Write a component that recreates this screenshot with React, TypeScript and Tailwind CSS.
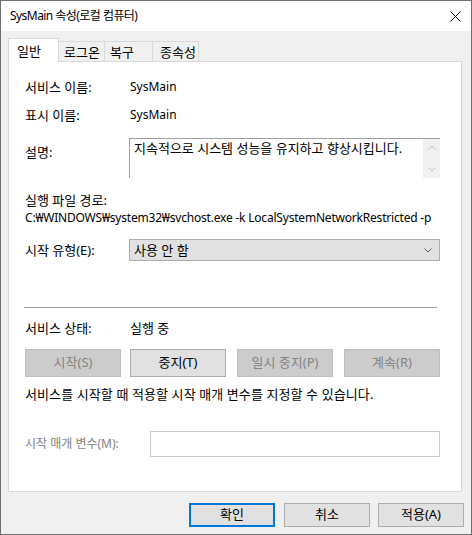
import React from "react";

const font = { fontFamily: '"Noto Sans", "Noto Sans CJK KR", sans-serif' };

const Tab = ({ label, w, pl, active }: { label: string; w: string; pl: string; active?: boolean }) => {
  if (active) {
    return (
      <div className={`${w} h-[24px] bg-white border border-b-0 border-[#d9d9d9] ${pl} pt-[4px] leading-[16px] relative z-10 -mb-px`}>
        {label}
      </div>
    );
  }
  return (
    <div className={`${w} h-[20px] mt-[3px] bg-[#f0f0f0] border border-b-0 border-l-0 border-[#d9d9d9] ${pl} pt-[2px] leading-[16px]`}>
      {label}
    </div>
  );
};

const SvcButton = ({ label, disabled, w, ml }: { label: string; disabled?: boolean; w: string; ml: string }) => (
  <div
    className={`${w} ${ml} h-[28px] flex items-center justify-center border ${
      disabled ? "bg-[#cccccc] border-[#bfbfbf] text-[#838383]" : "bg-[#e1e1e1] border-[#adadad] text-black"
    }`}
  >
    {label}
  </div>
);

export default function App() {
  return (
    <div
      className="w-[472px] h-[535px] bg-[#f0f0f0] border border-[#707070] flex flex-col text-[13px] text-black"
      style={font}
    >
      {/* title bar */}
      <div className="h-[30px] bg-white flex items-center justify-between pl-[9px] pr-[9px] shrink-0">
        <span className="leading-[16px] text-[12px] tracking-[-0.55px]">SysMain 속성(로컬 컴퓨터)</span>
        <svg width="11" height="11" viewBox="0 0 11 11" className="mr-[1px]">
          <path d="M0.5 0.5 L10.5 10.5 M10.5 0.5 L0.5 10.5" stroke="#000" strokeWidth="1" />
        </svg>
      </div>

      {/* tabs */}
      <div className="flex pl-[7px] mt-[7px]">
        <Tab label="일반" w="w-[51px]" pl="pl-[8px]" active />
        <Tab label="로그온" w="w-[46px]" pl="pl-[5px]" />
        <Tab label="복구" w="w-[48px]" pl="pl-[5px]" />
        <Tab label="종속성" w="w-[46px]" pl="pl-[7px]" />
      </div>

      {/* panel */}
      <div className="ml-[7px] w-[454px] h-[431px] bg-white border border-[#d9d9d9] flex flex-col pl-[16px]">
        <div className="flex mt-[17px] h-[16px] leading-[16px]">
          <span className="w-[105px]">서비스 이름:</span>
          <span className="text-[12px]">SysMain</span>
        </div>
        <div className="flex mt-[12px] h-[16px] leading-[16px]">
          <span className="w-[105px]">표시 이름:</span>
          <span className="text-[12px]">SysMain</span>
        </div>
        <div className="flex mt-[15px] h-[40px]">
          <span className="w-[104px] pt-[6px] leading-[16px]">설명:</span>
          <div className="w-[311px] h-[40px] border-t border-l border-[#a0a0a0] flex">
            <div className="flex-1 pl-[4px] pt-[1px] leading-[16px] whitespace-nowrap">지속적으로 시스템 성능을 유지하고 향상시킵니다.</div>
            <div className="w-[17px] bg-[#f0f0f0] flex flex-col items-center justify-between pt-[6px] pb-[6px]">
              <svg width="8" height="5" viewBox="0 0 8 5">
                <path d="M0.5 4.5 L4 1 L7.5 4.5" fill="none" stroke="#c2c2c2" strokeWidth="1" />
              </svg>
              <svg width="8" height="5" viewBox="0 0 8 5">
                <path d="M0.5 0.5 L4 4 L7.5 0.5" fill="none" stroke="#c2c2c2" strokeWidth="1" />
              </svg>
            </div>
          </div>
        </div>
        <div className="mt-[14px] h-[16px] leading-[16px]">실행 파일 경로:</div>
        <div className="mt-[2px] h-[16px] leading-[16px] whitespace-nowrap text-[12px] tracking-[-0.2px]">
          C:₩WINDOWS₩system32₩svchost.exe -k LocalSystemNetworkRestricted -p
        </div>
        <div className="flex items-center mt-[13px] h-[22px]">
          <span className="w-[104px] leading-[16px]">시작 유형(E):</span>
          <div className="w-[311px] h-[22px] bg-[#e1e1e1] border border-[#adadad] flex items-center justify-between pl-[4px] pr-[7px]">
            <span className="leading-[16px]">사용 안 함</span>
            <svg width="8" height="5" viewBox="0 0 8 5">
              <path d="M0.5 0.5 L4 4 L7.5 0.5" fill="none" stroke="#606060" strokeWidth="1" />
            </svg>
          </div>
        </div>
        <div className="mt-[46px] -ml-px w-[413px] h-px bg-[#a0a0a0]" />
        <div className="flex mt-[12px] h-[16px] leading-[16px]">
          <span className="w-[105px]">서비스 상태:</span>
          <span>실행 중</span>
        </div>
        <div className="flex mt-[13px]">
          <SvcButton label="시작(S)" disabled w="w-[96px]" ml="ml-0" />
          <SvcButton label="중지(T)" w="w-[96px]" ml="ml-[9px]" />
          <SvcButton label="일시 중지(P)" disabled w="w-[96px]" ml="ml-[11px]" />
          <SvcButton label="계속(R)" disabled w="w-[96px]" ml="ml-[11px]" />
        </div>
        <div className="mt-[9px] h-[16px] leading-[16px] whitespace-nowrap tracking-[0.1px]">서비스를 시작할 때 적용할 시작 매개 변수를 지정할 수 있습니다.</div>
        <div className="flex items-center mt-[29px] h-[26px]">
          <span className="w-[125px] leading-[16px] text-[12px] text-[#838383]">시작 매개 변수(M):</span>
          <div className="w-[290px] h-[26px] bg-white border border-[#cccccc]" />
        </div>
      </div>

      {/* bottom buttons */}
      <div className="flex mt-[11px] pl-[188px]">
        <div className="w-[86px] h-[24px] border-2 border-[#0078d7] bg-[#e1e1e1] flex items-center justify-center">
          확인
        </div>
        <div className="w-[86px] h-[24px] ml-[9px] border border-[#adadad] bg-[#e1e1e1] flex items-center justify-center">
          취소
        </div>
        <div className="w-[86px] h-[24px] ml-[8px] border border-[#adadad] bg-[#e1e1e1] flex items-center justify-center">
          적용(A)
        </div>
      </div>
    </div>
  );
}
